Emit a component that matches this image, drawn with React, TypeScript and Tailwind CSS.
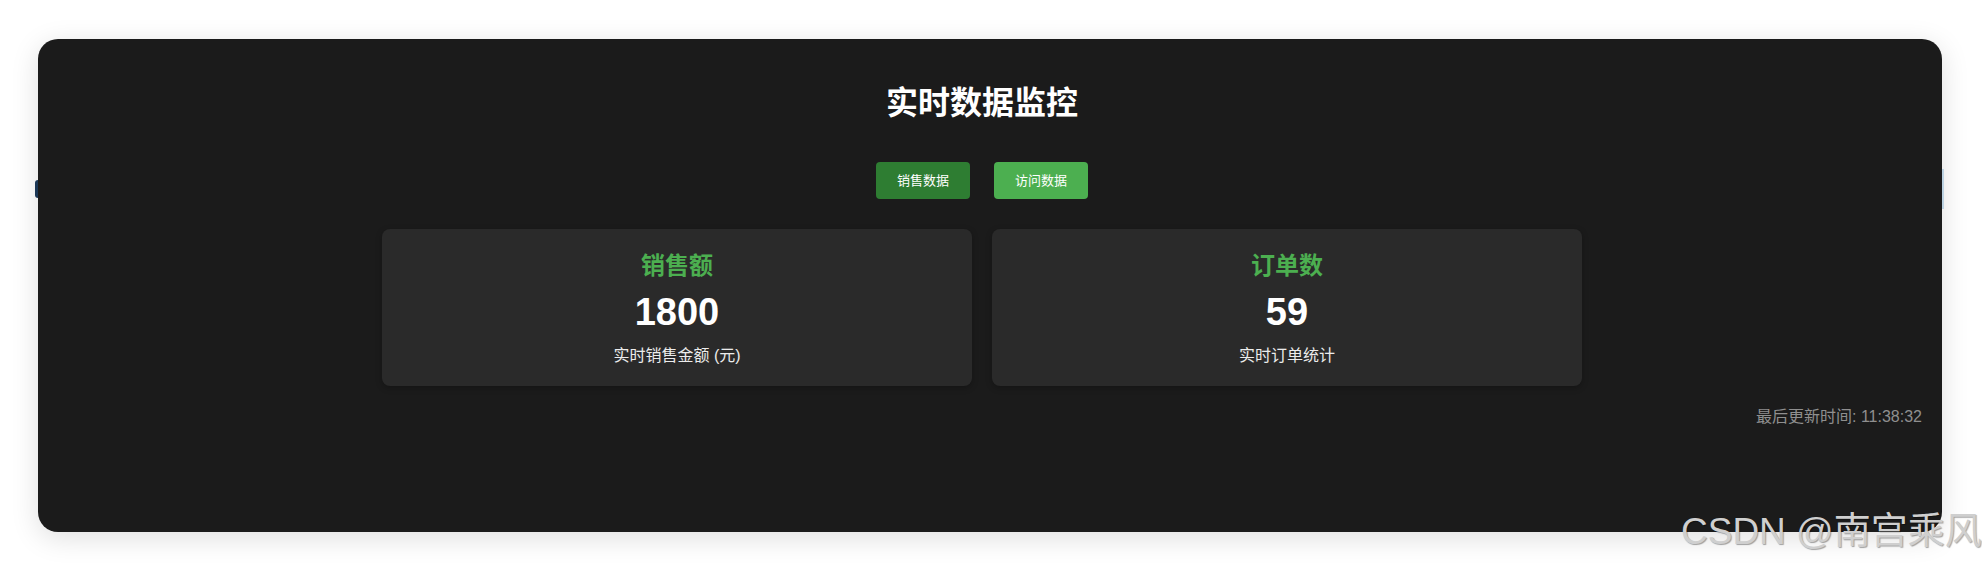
import { useState } from "react";

type Metric = {
  title: string;
  value: number;
  desc: string;
};

const metrics: Metric[] = [
  { title: "销售额", value: 1800, desc: "实时销售金额 (元)" },
  { title: "订单数", value: 59, desc: "实时订单统计" },
];

const FONT = "font-['Liberation_Sans','Noto_Sans_CJK_SC',sans-serif]";

const MetricCard = ({ item }: { item: Metric }) => (
  <div className="h-[157px] rounded-lg bg-[#2a2a2a] pt-5 flex flex-col items-center shadow-[0_2px_6px_rgba(0,0,0,0.25)]">
    <div className="h-[33px] leading-[33px] text-[24px] font-bold text-[#4caf50]">
      {item.title}
    </div>
    <div className="mt-2 h-[44px] leading-[44px] text-[38px] font-bold text-white">
      {item.value}
    </div>
    <div className="mt-3 h-5 leading-5 text-[16px] text-[#ececec]">
      {item.desc}
    </div>
  </div>
);

export default function App() {
  const [tab, setTab] = useState<"sales" | "visits">("sales");

  return (
    <div className={`relative min-h-screen bg-white pt-[39px] ${FONT}`}>
      {/* bits of the chart behind the panel */}
      <div className="absolute left-[35px] top-[180px] h-[18px] w-[6px] rounded-full bg-[#1d3b5c]" />
      <div className="absolute left-[1938px] top-[169px] h-[40px] w-[6px] bg-[#c9e1f2]" />

      <div className="relative ml-[38px] flex h-[493px] w-[1904px] flex-col rounded-[20px] bg-[#1b1b1b] px-5 pt-5 shadow-[0_6px_28px_rgba(0,0,0,0.13)]">
        <div className="mr-4 flex flex-col items-center">
          <h1 className="mt-6 h-10 leading-10 text-[32px] font-bold text-white">
            实时数据监控
          </h1>

          <div className="mt-[39px] flex gap-6">
            <button
              onClick={() => setTab("sales")}
              className="h-[37px] w-[94px] rounded bg-[#2e7d32] text-[13px] text-white"
            >
              销售数据
            </button>
            <button
              onClick={() => setTab("visits")}
              className="h-[37px] w-[94px] rounded bg-[#4caf50] text-[13px] text-white"
            >
              访问数据
            </button>
          </div>

          <div className="mt-[30px] grid w-[1200px] grid-cols-2 gap-5" data-tab={tab}>
            {metrics.map((m) => (
              <MetricCard key={m.title} item={m} />
            ))}
          </div>
        </div>

        <div className="mt-[21px] h-5 leading-5 text-right text-[16px] text-[#8f8f8f]">
          最后更新时间: 11:38:32
        </div>
      </div>

      {/* watermark */}
      <div className="absolute left-[1681px] top-[508px] whitespace-nowrap text-[37px] leading-[48px] text-[#cfcfcf] [text-shadow:1px_1px_1px_rgba(0,0,0,0.35)]">
        CSDN @南宫乘风
      </div>
    </div>
  );
}
